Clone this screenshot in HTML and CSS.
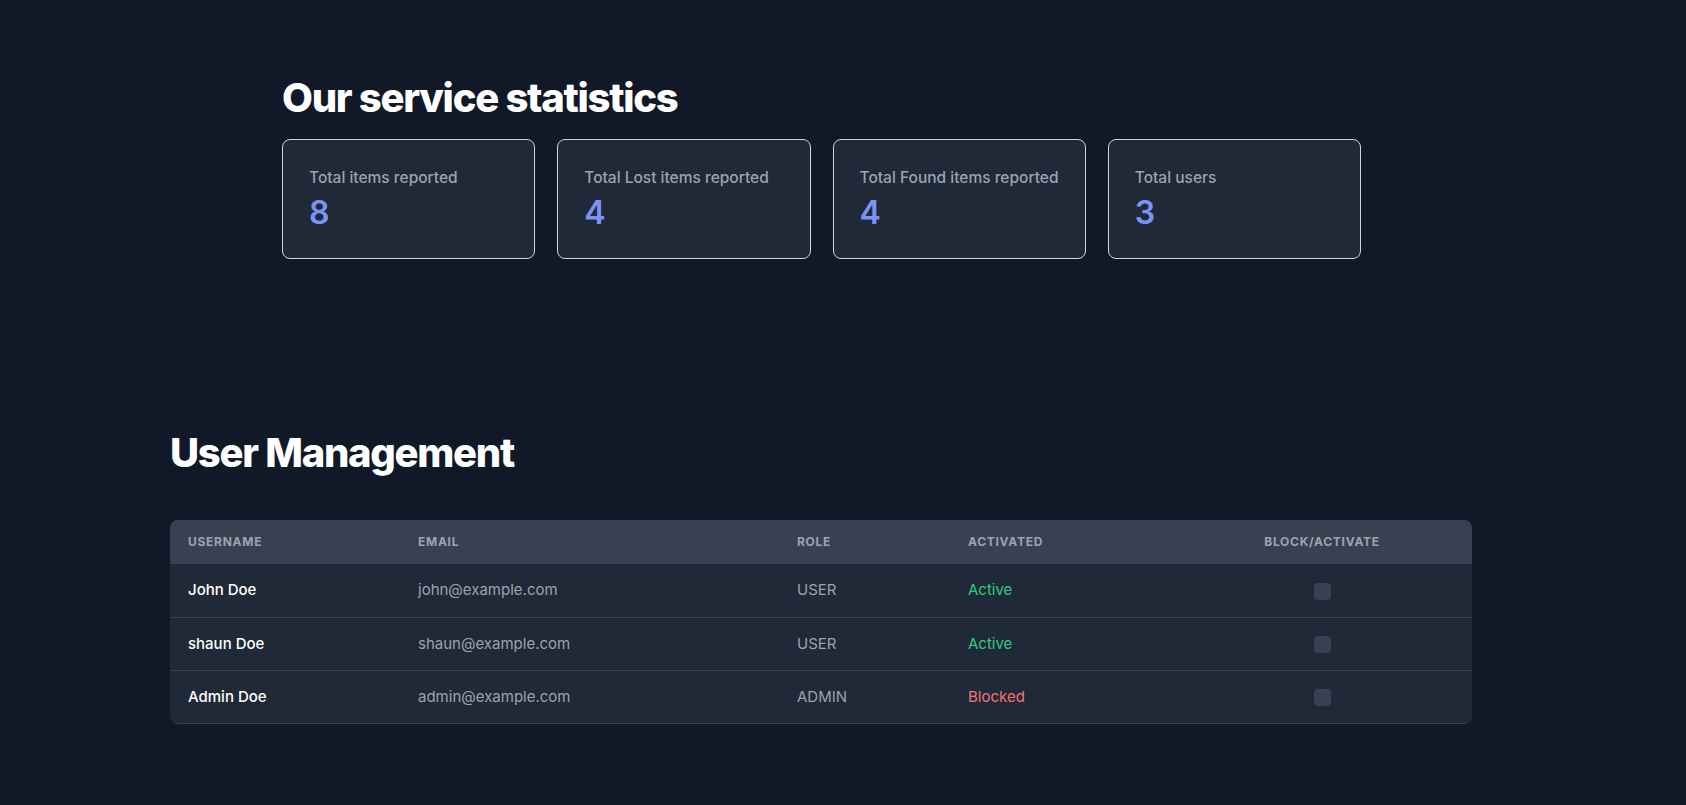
FILE: index.html
```html
<!DOCTYPE html>
<html lang="en">
<head>
<meta charset="utf-8">
<title>Admin Dashboard</title>
<link rel="stylesheet" href="styles.css">
</head>
<body>
<main class="page">
  <section class="stats">
    <h1 class="title">Our service statistics</h1>
    <div class="cards">
      <div class="card"><p class="card-label">Total items reported</p><p class="card-value">8</p></div>
      <div class="card"><p class="card-label">Total Lost items reported</p><p class="card-value">4</p></div>
      <div class="card"><p class="card-label">Total Found items reported</p><p class="card-value">4</p></div>
      <div class="card"><p class="card-label">Total users</p><p class="card-value">3</p></div>
    </div>
  </section>
  <section class="users">
    <h2 class="title">User Management</h2>
    <div class="table-wrap">
      <table class="table">
        <colgroup>
          <col class="c-user"><col class="c-email"><col class="c-role"><col class="c-act"><col class="c-block">
        </colgroup>
        <thead>
          <tr><th>Username</th><th>Email</th><th>Role</th><th>Activated</th><th class="center">Block/Activate</th></tr>
        </thead>
        <tbody>
          <tr><td class="name">John Doe</td><td class="muted">john@example.com</td><td class="muted">USER</td><td class="ok">Active</td><td class="center"><span class="check"></span></td></tr>
          <tr><td class="name">shaun Doe</td><td class="muted">shaun@example.com</td><td class="muted">USER</td><td class="ok">Active</td><td class="center"><span class="check"></span></td></tr>
          <tr><td class="name">Admin Doe</td><td class="muted">admin@example.com</td><td class="muted">ADMIN</td><td class="bad">Blocked</td><td class="center"><span class="check"></span></td></tr>
        </tbody>
      </table>
    </div>
  </section>
</main>
</body>
</html>
```

FILE: styles.css
```css
* { box-sizing: border-box; }
html, body { margin: 0; padding: 0; }
body {
  background: #111827;
  color: #ffffff;
  font-family: Inter, "Noto Sans", sans-serif;
  height: 805px;
  overflow: hidden;
}
.page {
  width: 1302px;
  margin-left: 170px;
  padding-top: 76px;
}
.title {
  margin: 0;
  font-size: 40px;
  line-height: 44px;
  font-weight: 800;
  letter-spacing: -0.032em;
  color: #ffffff;
}
.stats {
  padding: 0 111px 0 112px;
}
.stats .title { margin-bottom: 19px; }
.cards {
  display: grid;
  grid-template-columns: repeat(4, 1fr);
  gap: 22px;
}
.card {
  height: 120px;
  background: #1f2937;
  border: 1px solid #d1d5db;
  border-radius: 8px;
  padding: 27px 26px 0;
}
.card-label {
  margin: 0;
  font-size: 15.5px;
  line-height: 22px;
  font-weight: 500;
  color: #9ca3af;
}
.card-value {
  margin: 4px 0 0;
  font-size: 32px;
  line-height: 40px;
  font-weight: 600;
  color: #7c93f4;
}
.users {
  margin-top: 172px;
}
.users .title { margin-bottom: 45px; }
.table-wrap {
  border-radius: 8px;
  overflow: hidden;
  background: #1f2937;
}
.table {
  width: 100%;
  border-collapse: collapse;
  table-layout: fixed;
}
.c-user { width: 230px; }
.c-email { width: 379px; }
.c-role { width: 171px; }
.c-act { width: 222px; }
.c-block { width: 300px; }
.table th {
  background: #374151;
  height: 44px;
  padding: 0 18px;
  text-align: left;
  font-size: 12px;
  line-height: 16px;
  font-weight: 700;
  text-transform: uppercase;
  letter-spacing: 0.06em;
  color: #9ca3af;
}
.table td {
  height: 53px;
  padding: 0 18px;
  font-size: 15px;
  line-height: 20px;
  border-bottom: 1px solid #374151;
  vertical-align: middle;
}
.table .center { text-align: center; }
.name { color: #ffffff; font-weight: 500; }
.muted { color: #9ca3af; }
.ok { color: #2ecc80; }
.bad { color: #f87171; }
.check {
  display: inline-block;
  width: 17px;
  height: 17px;
  border-radius: 4px;
  background: #374151;
  vertical-align: middle;
}
```
